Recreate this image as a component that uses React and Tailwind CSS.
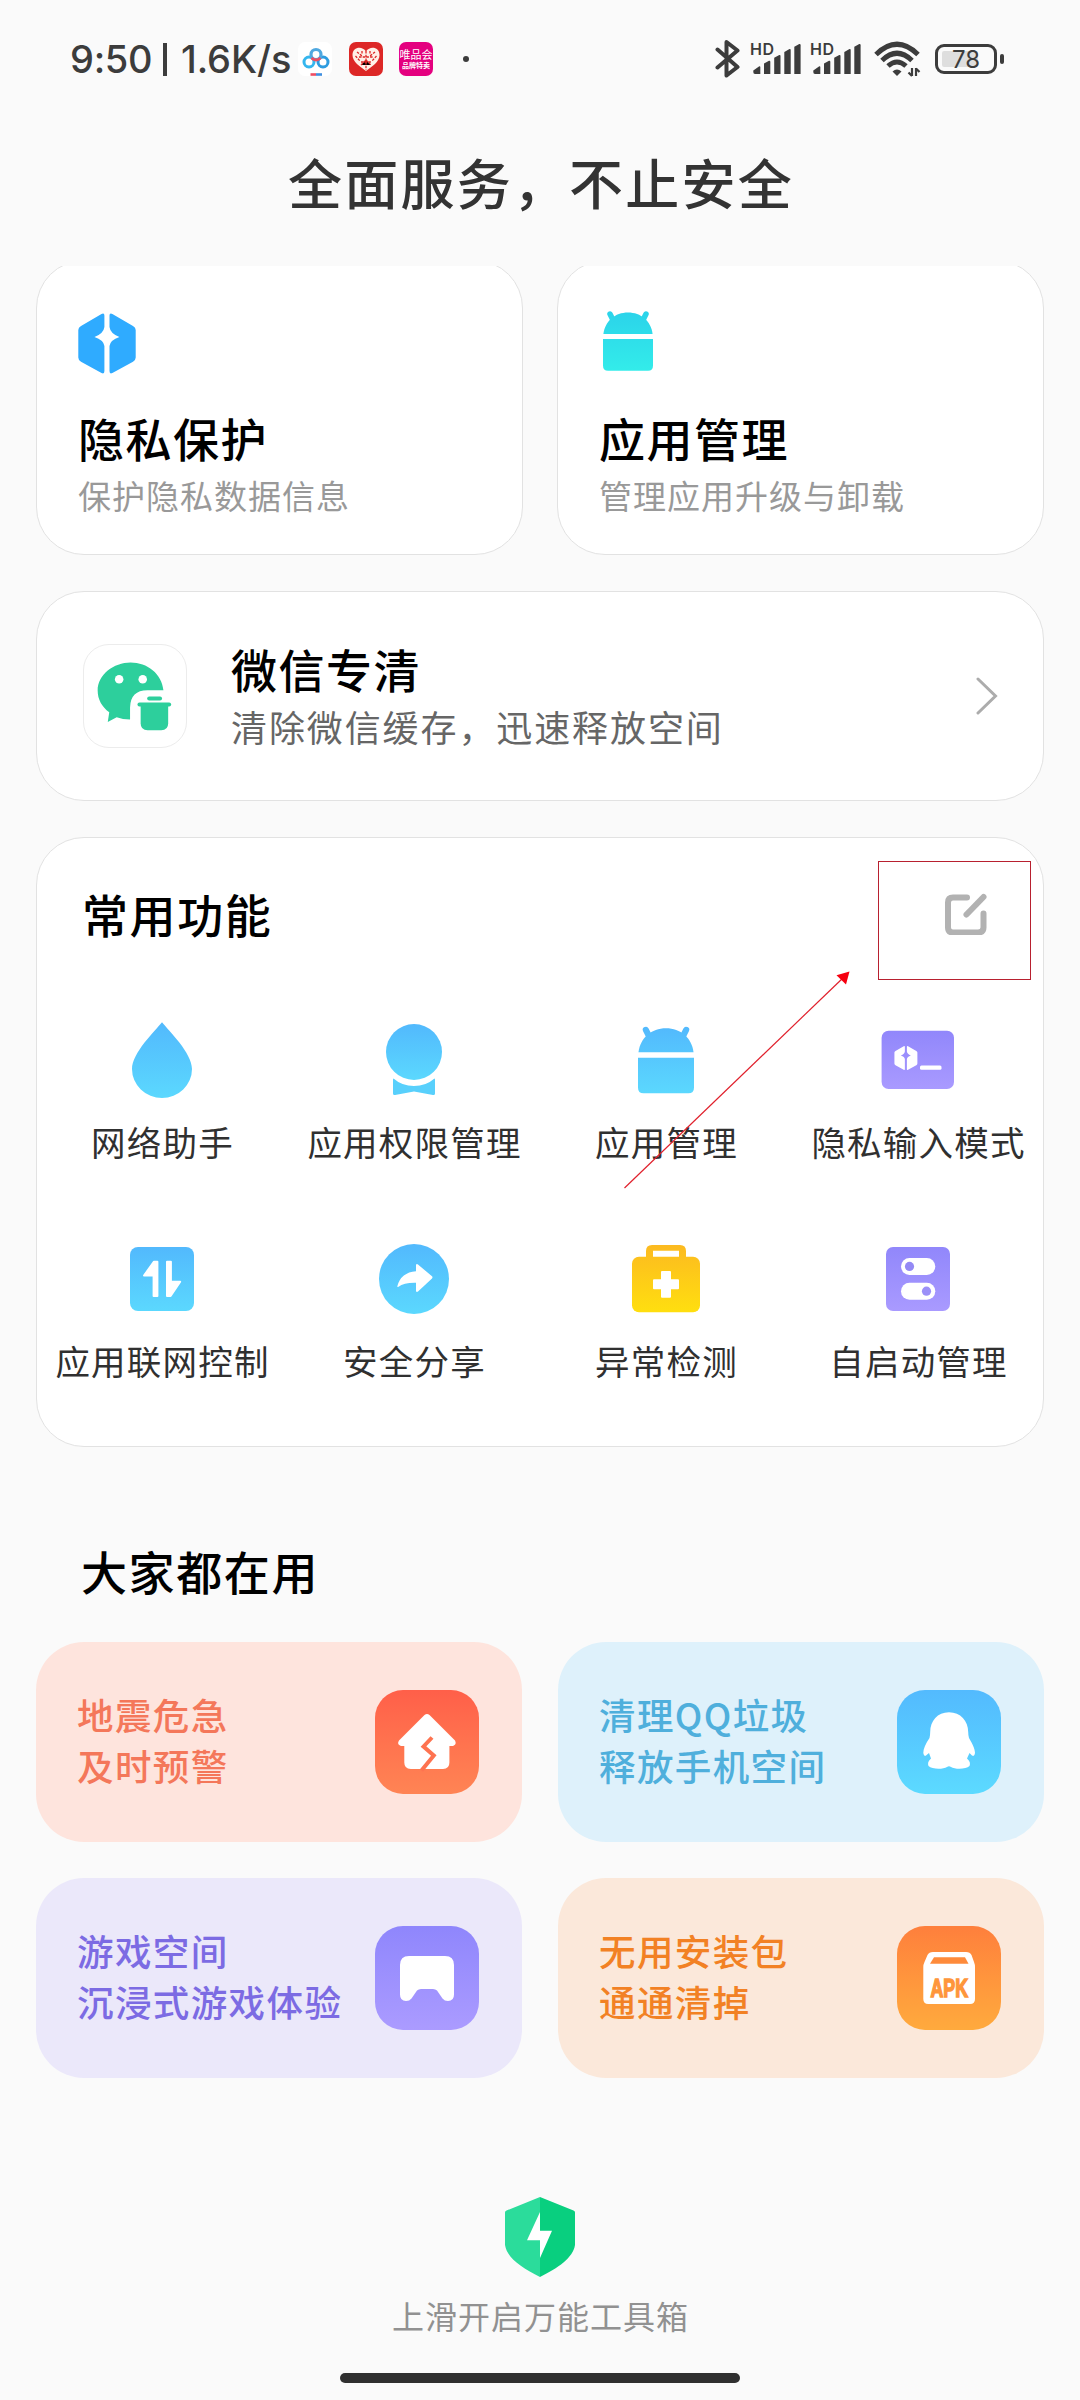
import React from 'react';

const BlueGradient = ({ id }) => (
    <linearGradient id={id} x1="0" y1="0" x2="0" y2="1">
        <stop offset="0" stopColor="#52b9fd" />
        <stop offset="1" stopColor="#5bd8fe" />
    </linearGradient>
);

const PurpleGradient = ({ id }) => (
    <linearGradient id={id} x1="0" y1="0" x2="0" y2="1">
        <stop offset="0" stopColor="#9187fb" />
        <stop offset="1" stopColor="#a99aff" />
    </linearGradient>
);

const HexShape = () => (
    <>
        <path d="M23.5 3Q26.4 1.6 26.4 4.5V16Q25.6 22.5 16.5 26Q25.6 29 26.4 35V60Q26.4 63.6 23.5 62L3 50.8Q.3 49.2 .3 46.5V19Q.3 16.5 3 15Z" />
        <path d="M34.4 3Q31.5 1.6 31.5 4.5V16Q32.3 22.5 41.4 26Q32.3 29 31.5 35V60Q31.5 63.6 34.4 62L55 50.8Q57.7 49.2 57.7 46.5V19Q57.7 16.5 55 15Z" />
    </>
);

const AndroidShape = ({ fill }) => (
    <g fill={fill}>
        <path d="M.4 23C2 10 12 1.5 25 1.5S48 10 49.6 23Z" />
        <path d="M0 28H50V54.7Q50 59.7 45 59.7H5Q0 59.7 0 54.7Z" />
        <path d="M7 3L10.5 10M43 3L39.5 10" stroke={fill} strokeWidth="5.5" strokeLinecap="round" />
    </g>
);

const PrivacyIcon = () => (
    <svg className="w-[60px] h-[64px]" viewBox="0 0 60 64" fill="#2fabff">
        <HexShape />
    </svg>
);

const AppsIcon = () => (
    <svg className="w-[60px] h-[64px]" viewBox="0 0 60 64">
        <defs>
            <linearGradient id="apps" gradientUnits="userSpaceOnUse" x1="0" y1="0" x2="0" y2="60">
                <stop offset="0" stopColor="#2bd3ea" />
                <stop offset="1" stopColor="#33ecea" />
            </linearGradient>
        </defs>
        <g transform="translate(4 0)">
            <AndroidShape fill="url(#apps)" />
        </g>
    </svg>
);

const WechatCleanIcon = () => (
    <svg className="w-full h-full" viewBox="0 0 103 103" fill="#2dcf9c">
        <path d="M80.2 45.7C78.5 29 64 17.7 47 17.7S13.8 30 13.8 46C13.8 55 18 62.5 25.5 68L24 77.7L33 73Q39 75.2 46.5 75.3V63Q47 45.7 64 45.7Z" />
        <rect x="63.8" y="52" width="15" height="4" rx="2" />
        <rect x="54" y="58" width="34" height="4" rx="2" />
        <path d="M57.2 60H85V79Q85 86 78 86H64.2Q57.2 86 57.2 79Z" />
        <circle cx="35.5" cy="34.7" r="4.3" fill="#fff" />
        <circle cx="59.3" cy="34.7" r="4.3" fill="#fff" />
    </svg>
);

const DropIcon = () => (
    <svg className="w-[88px] h-[88px]" viewBox="0 0 88 88">
        <defs><BlueGradient id="drop" /></defs>
        <path d="M44 6.3C51 15 74 37 74 53A30 29 0 0 1 14 53C14 37 37 15 44 6.3Z" fill="url(#drop)" />
    </svg>
);

const PermissionIcon = () => (
    <svg className="w-[88px] h-[88px]" viewBox="0 0 88 88">
        <defs><BlueGradient id="perm" /></defs>
        <circle cx="44" cy="36" r="28" fill="url(#perm)" />
        <path d="M23.5 62.5Q32 70 44 70T64.500 62.500Q65 62.500 65 64V77.500Q65 79.300 63 79L44 75.500L25 79Q23 79.300 23 77.500V64Q23 62.500 23.500 62.500Z" fill="#58d0fc" />
    </svg>
);

const AndroidIcon = () => (
    <svg className="w-[88px] h-[88px]" viewBox="0 0 88 88">
        <defs>
            <linearGradient id="android" gradientUnits="userSpaceOnUse" x1="0" y1="0" x2="0" y2="60">
                <stop offset="0" stopColor="#52b9fd" />
                <stop offset="1" stopColor="#5bd8fe" />
            </linearGradient>
        </defs>
        <g transform="translate(16 10.5) scale(1.12)">
            <AndroidShape fill="url(#android)" />
        </g>
    </svg>
);

const PrivateInputIcon = () => (
    <svg className="w-[88px] h-[88px]" viewBox="0 0 88 88" fill="#fff">
        <defs><PurpleGradient id="input" /></defs>
        <rect x="7.6" y="14.7" width="72.4" height="58.3" rx="7" fill="url(#input)" />
        <g transform="translate(20.3 29) scale(.4)">
            <HexShape />
        </g>
        <rect x="46" y="49.5" width="21.5" height="4.2" rx="1.5" />
    </svg>
);

const NetControlIcon = () => (
    <svg className="w-[88px] h-[88px]" viewBox="0 0 88 88">
        <defs><BlueGradient id="net" /></defs>
        <rect x="12" y="12" width="64" height="64" rx="8" fill="url(#net)" />
        <g fill="#fff" stroke="#fff" strokeWidth="2" strokeLinejoin="round">
            <path d="M36 26.7H39.4V61H35.6V40.5H26Z" />
            <path d="M52.6 61H49V26.7H52.9V46.8H62.2Z" />
        </g>
    </svg>
);

const ShareIcon = () => (
    <svg className="w-[88px] h-[88px]" viewBox="0 0 88 88">
        <defs><BlueGradient id="share" /></defs>
        <circle cx="44" cy="44" r="35" fill="url(#share)" />
        <path d="M46 30Q46.5 28.5 48 29.5L62 41.3Q63 42.3 62 43.5L48 56.5Q46.5 57.5 46 56V47.8Q34 47.5 28.5 51.8Q27 52.5 27.4 51Q31 37.5 46 36.3Z" fill="#fff" />
    </svg>
);

const MedkitIcon = () => (
    <svg className="w-[88px] h-[88px]" viewBox="0 0 88 88">
        <defs>
            <linearGradient id="kit" gradientUnits="userSpaceOnUse" x1="0" y1="10" x2="0" y2="78">
                <stop offset="0" stopColor="#fcba20" />
                <stop offset="1" stopColor="#ffdf0f" />
            </linearGradient>
        </defs>
        <path d="M24 23V16Q24 10 30 10H58Q64 10 64 16V23H57V15.7H31V23Z" fill="url(#kit)" />
        <rect x="10" y="21.7" width="68" height="55.6" rx="7" fill="url(#kit)" />
        <rect x="31" y="44.3" width="26" height="10" rx="1" fill="#fff" />
        <rect x="39" y="36" width="10" height="26.7" rx="1" fill="#fff" />
    </svg>
);

const AutostartIcon = () => (
    <svg className="w-[88px] h-[88px]" viewBox="0 0 88 88">
        <defs><PurpleGradient id="auto" /></defs>
        <rect x="12" y="12" width="64" height="64" rx="7" fill="url(#auto)" />
        <rect x="27" y="23" width="34.3" height="17" rx="8.5" fill="#fff" />
        <rect x="27" y="47.7" width="34.3" height="17" rx="8.5" fill="#fff" />
        <circle cx="35.5" cy="31.4" r="4.6" fill="#9489f5" />
        <circle cx="52.5" cy="56.2" r="4.6" fill="#9b90f8" />
    </svg>
);

const HouseIcon = () => (
    <svg className="w-full h-full" viewBox="0 0 104 104">
        <path d="M49.5 25Q52 23 54.5 25L80 50.5Q82 54.5 78 56H74.4V72.5Q74.4 79 68 79H35.8Q29.3 79 29.3 72.5V56H26Q21.5 54.5 24 50.5Z" fill="#fff" />
        <path d="M57 47.5L48.5 56.5L58.8 65.5L46.5 80.5" fill="none" stroke="#fe7350" strokeWidth="4" />
    </svg>
);

const PenguinIcon = () => (
    <svg className="w-full h-full" viewBox="0 0 104 104">
        <path
            d="M52 22.3C40.5 22.3 33.2 31 33.2 42Q33.2 45 32.5 48C28.5 54 26.3 59 26.3 63Q27 67 29 65.5L32 63L34 68.5C31 71 30.5 73.5 31.5 76C35 79.5 46 79.5 50 77Q52 75.5 54 77C58 79.5 69 79.5 72.5 76C73.5 73.5 73 71 70 68.5L72.5 63L75 65.5Q77.5 67 78 63C78 59 75.5 54 72 48Q71.2 45 71.2 42C71.2 31 63.5 22.3 52 22.3Z"
            fill="#fff"
        />
    </svg>
);

const GamepadIcon = () => (
    <svg className="w-full h-full" viewBox="0 0 104 104">
        <path d="M34 30H70Q79 30 79 39V68.5Q79 75 73 75Q69.5 75 67.5 72.5L62 64.5Q60.5 63 58 63H46Q43.5 63 42 64.5L36.5 72.5Q34.5 75 31 75Q25 75 25 68.5V39Q25 30 34 30Z" fill="#fff" />
    </svg>
);

const ApkIcon = () => (
    <svg className="w-full h-full" viewBox="0 0 104 104">
        <path d="M36 26H69Q73 26 74.5 29L77 36Q78 38.5 78 41V73Q78 78 73 78H31.3Q26.3 78 26.3 73V41Q26.3 38.5 27.5 36L30.5 29Q32 26 36 26Z" fill="#fff" />
        <path d="M37 31.3H68L71.5 37.7H33Z" fill="#fe8b3b" />
        <text x="33.5" y="71" fontSize="26" fontWeight="700" fill="#fe963b" stroke="#fe963b" strokeWidth="1.6" textLength="37.5" lengthAdjust="spacingAndGlyphs" fontFamily="Liberation Sans, sans-serif">APK</text>
    </svg>
);

const SignalIcon = () => (
    <svg className="w-[52px] h-[36px] overflow-visible" viewBox="0 0 52 36" fill="#3c3c3c">
        <text x="0" y="13.5" fontSize="16" fontWeight="600" textLength="24" fontFamily="Inter, sans-serif">HD</text>
        <path d="M3.3 29.5L9.3 25.2Q10.3 25 10.3 26V33H5Q3.3 33 3.3 31Z" />
        <path d="M14 22.5L19 19.8Q20.3 19.5 20.3 20.8V33H14Z" />
        <path d="M24.2 16.8L29.3 14Q30.5 13.7 30.5 15V33H24.2Z" />
        <path d="M34.3 11L39.5 8Q40.7 7.7 40.7 9V33H34.3Z" />
        <path d="M44.3 5.8L49.3 3Q50.6 2.6 50.6 4V33H44.3Z" />
    </svg>
);

const StatusBar = () => (
    <div className="flex items-center h-[118px] text-[#3c3c3c]">
        <span className="ml-[70px] w-[93px] text-[38px] leading-none tracking-[-0.3px] whitespace-nowrap font-[Inter,sans-serif] font-medium">9:50</span>
        <span className="w-1 h-[33px] bg-[#3c3c3c]"></span>
        <span className="ml-[14px] w-[117px] text-[38px] leading-none tracking-[-0.1px] whitespace-nowrap font-[Inter,sans-serif] font-medium">1.6K/s</span>
        <svg className="w-[34px] h-[34px]" viewBox="0 0 34 34" fill="none">
            <rect width="34" height="34" rx="7" fill="#fff" />
            <circle cx="11" cy="20" r="5" stroke="#35b6ee" strokeWidth="3" />
            <circle cx="25" cy="20" r="5" stroke="#2e9ce0" strokeWidth="3" />
            <circle cx="18" cy="12.5" r="5" stroke="#4fa8e0" strokeWidth="3.2" />
            <path d="M13.5 16Q18 20 22.5 16" stroke="#ee4d62" strokeWidth="3" />
            <path d="M12.5 32.5H18" stroke="#ee4d62" strokeWidth="2.6" />
            <path d="M18 32.5H24" stroke="#3f8fe0" strokeWidth="2.6" />
        </svg>
        <svg className="ml-[17px] w-[34px] h-[34px]" viewBox="0 0 34 34">
            <rect width="34" height="34" rx="7" fill="#dd2726" />
            <path d="M17 29C11 24.5 3.5 20 3.5 13C3.5 5 13 3.5 17 9.5C21 3.5 30.5 5 30.5 13C30.5 20 23 24.5 17 29Z" fill="#fff0e8" />
            <path d="M17 9V28M10 15H24M12 20H22M8 10L13 14M26 10L21 14M12 23L17 18L22 23M6.5 14L11 19M27.5 14L23 19M13 9V12M21 9V12" stroke="#dd2726" strokeWidth="1.3" strokeDasharray="2.5 1.2" />
        </svg>
        <div className="ml-4 w-[34px] h-[34px] rounded-[7px] bg-[#e4007f] overflow-hidden flex flex-col items-center justify-center text-white whitespace-nowrap">
            <span className="text-[11px] leading-[13px]">唯品会</span>
            <span className="text-[7px] leading-[9px] font-bold">品牌特卖</span>
        </div>
        <span className="ml-[30px] w-1.5 h-1.5 rounded-full bg-[#3c3c3c]"></span>

        <svg className="ml-auto w-[26px] h-[40px]" viewBox="0 0 26 40" fill="none" stroke="#3c3c3c" strokeWidth="4" strokeLinecap="round" strokeLinejoin="round">
            <path d="M2.5 10.5L22.5 28L11.5 36.5V3L22.5 11.5L2.5 28.5" />
        </svg>
        <div className="ml-[9px]"><SignalIcon /></div>
        <div className="ml-2"><SignalIcon /></div>
        <svg className="ml-3 w-[48px] h-[40px]" viewBox="0 0 48 40" fill="none" stroke="#3c3c3c" strokeWidth="5">
            <path d="M2 15.5Q23 -5 44 15.5" />
            <path d="M8 21.5Q23 7 38 21.5" />
            <path d="M14 27Q23 19 32 27" />
            <path d="M18.5 32.5Q23 28.5 27.5 32.5L23 37Z" fill="#3c3c3c" stroke="none" />
            <path d="M38 29V37M38 37L34.5 33.5M42 37V29M42 29.5L45.5 33" strokeWidth="2.2" />
        </svg>
        <div className="ml-[13px] w-[62px] h-[30px] p-1 rounded-[9px] border-[3px] border-[#3c3c3c] flex relative">
            <span className="w-[36px] h-full rounded-xs bg-[#dedede]"></span>
            <span className="absolute inset-0 text-center text-[24px] leading-[25px] font-[Inter,sans-serif]">78</span>
        </div>
        <span className="ml-[3px] mr-[76px] w-1 h-2.5 rounded-xs bg-[#3c3c3c]"></span>
    </div>
);

const topCards = [
    { title: '隐私保护', subtitle: '保护隐私数据信息', Icon: PrivacyIcon },
    { title: '应用管理', subtitle: '管理应用升级与卸载', Icon: AppsIcon },
];

const features = [
    { label: '网络助手', Icon: DropIcon },
    { label: '应用权限管理', Icon: PermissionIcon },
    { label: '应用管理', Icon: AndroidIcon },
    { label: '隐私输入模式', Icon: PrivateInputIcon },
    { label: '应用联网控制', Icon: NetControlIcon },
    { label: '安全分享', Icon: ShareIcon },
    { label: '异常检测', Icon: MedkitIcon },
    { label: '自启动管理', Icon: AutostartIcon },
];

const popular = [
    { lines: ['地震危急', '及时预警'], Icon: HouseIcon, card: 'bg-[#fee4dd] text-[#f4775a]', tile: 'from-[#ff5f49] to-[#ff8454]' },
    { lines: ['清理QQ垃圾', '释放手机空间'], Icon: PenguinIcon, card: 'bg-[#def1fb] text-[#4fafdc]', tile: 'from-[#53bafe] to-[#5cdaff]' },
    { lines: ['游戏空间', '沉浸式游戏体验'], Icon: GamepadIcon, card: 'bg-[#ebe8fa] text-[#7c6be3]', tile: 'from-[#8f86fc] to-[#ab9bff]' },
    { lines: ['无用安装包', '通通清掉'], Icon: ApkIcon, card: 'bg-[#fbe8da] text-[#f28124]', tile: 'from-[#fe7f3c] to-[#ffaa3d]' },
];

const App = () => {
    return (
        <div className="relative w-[1080px] h-[2400px] overflow-hidden bg-[#fafafa] text-black font-['Noto_Sans_CJK_SC',sans-serif]">
            <header className="h-[266px]">
                <StatusBar />
                <h1 className="pl-0.5 text-center text-[54px] leading-[127px] tracking-[2.2px] font-medium text-[#333]">全面服务，不止安全</h1>
            </header>

            <main className="overflow-hidden px-9">
                <div className="grid grid-cols-2 gap-x-[34px] -mt-1.5">
                    {topCards.map(({ title, subtitle, Icon }) => (
                        <div key={title} className="h-[295px] rounded-[48px] border border-[#e2e2e2] bg-white pl-[41px] pt-[50px]">
                            <Icon />
                            <h2 className="mt-[34px] text-[46px] leading-[56px] tracking-[1.5px] font-medium">{title}</h2>
                            <p className="mt-2 text-[33px] leading-[44px] tracking-[1px] text-[#999]">{subtitle}</p>
                        </div>
                    ))}
                </div>

                <div className="mt-9 h-[210px] rounded-[48px] border border-[#e2e2e2] bg-white pl-[46px] pr-[45px] flex items-center">
                    <div className="w-[104px] h-[104px] rounded-[26px] border border-[#ececec]">
                        <WechatCleanIcon />
                    </div>
                    <div className="ml-[44px] flex-1 pb-[5px]">
                        <h2 className="text-[46px] leading-[56px] tracking-[1.5px] font-medium">微信专清</h2>
                        <p className="mt-2 text-[36px] leading-[44px] tracking-[1.9px] text-[#666]">清除微信缓存，迅速释放空间</p>
                    </div>
                    <svg className="w-[22px] h-[38px]" viewBox="0 0 22 38" fill="none" stroke="#acacac" strokeWidth="3" strokeLinecap="round">
                        <path d="M2 2L19.5 19L2 36" />
                    </svg>
                </div>

                <section className="mt-9 h-[610px] rounded-[48px] border border-[#e2e2e2] bg-white">
                    <div className="h-[150px] pl-[45px] pr-[55px] flex items-center justify-between">
                        <h2 className="text-[46px] leading-[56px] tracking-[1.6px] font-medium">常用功能</h2>
                        <svg className="w-[44px] h-[44px]" viewBox="0 0 44 44" fill="none" stroke="#b2b2b2" strokeWidth="6" strokeLinecap="round" strokeLinejoin="round">
                            <path d="M23 6.500H9Q4 6.500 4 11.500V36.500Q4 41.500 9 41.500H34Q39.500 41.500 39.500 36.500V22.500" />
                            <path d="M22.500 23.500L39.500 6" />
                        </svg>
                    </div>
                    <div className="-mx-px mt-7 grid grid-cols-4 gap-y-[69px]">
                        {features.map(({ label, Icon }) => (
                            <div key={label} className="h-[150px] flex flex-col items-center">
                                <Icon />
                                <span className="mt-[13px] pl-px text-[34.5px] leading-[48px] tracking-[1.2px] whitespace-nowrap text-[#303030]">{label}</span>
                            </div>
                        ))}
                    </div>
                </section>

                <h2 className="mt-[93px] mb-[42px] pl-[45px] text-[46px] leading-[60px] tracking-[1.6px] font-medium">大家都在用</h2>

                <div className="grid grid-cols-2 gap-9">
                    {popular.map(({ lines, Icon, card, tile }) => (
                        <div key={lines[0]} className={`h-[200px] rounded-[48px] pl-[41px] pr-[43px] flex items-center justify-between ${card}`}>
                            <div className="pb-[5px] text-[36.5px] leading-[51px] tracking-[1.4px] font-medium whitespace-nowrap">
                                <p>{lines[0]}</p>
                                <p>{lines[1]}</p>
                            </div>
                            <div className={`w-[104px] h-[104px] rounded-[28px] bg-linear-to-b ${tile}`}>
                                <Icon />
                            </div>
                        </div>
                    ))}
                </div>
            </main>

            <footer className="mt-[119px] flex flex-col items-center">
                <svg className="w-[70px] h-[80px]" viewBox="0 0 70 80">
                    <path d="M35 0L1.5 13.5Q0 14 0 15.5V48C2 61 17 71 35 80Z" fill="#2bdc9b" />
                    <path d="M35 0L68.5 13.5Q70 14 70 15.5V48C68 61 53 71 35 80Z" fill="#09cf7f" />
                    <path d="M35 15V33.7H47L35 61V43.3H22Z" fill="#fff" />
                </svg>
                <p className="mt-[18px] pl-px text-[32px] leading-[40px] tracking-[1px] text-[#919191]">上滑开启万能工具箱</p>
                <div className="mt-[38px] w-[400px] h-2.5 rounded-full bg-[#303030]"></div>
            </footer>

            {/* highlight for the edit button */}
            <div className="absolute left-[878px] top-[861px] w-[153px] h-[119px] border border-[#b8202f]"></div>
            <svg className="absolute left-[620px] top-[968px] w-[234px] h-[224px]" viewBox="0 0 234 224">
                <path d="M4.5 220L224 9" stroke="#e0202c" strokeWidth="1.2" />
                <path d="M229.5 3.5L216.5 7.2L226 16.5Z" fill="#f60010" />
            </svg>
        </div>
    );
};

export default App;
